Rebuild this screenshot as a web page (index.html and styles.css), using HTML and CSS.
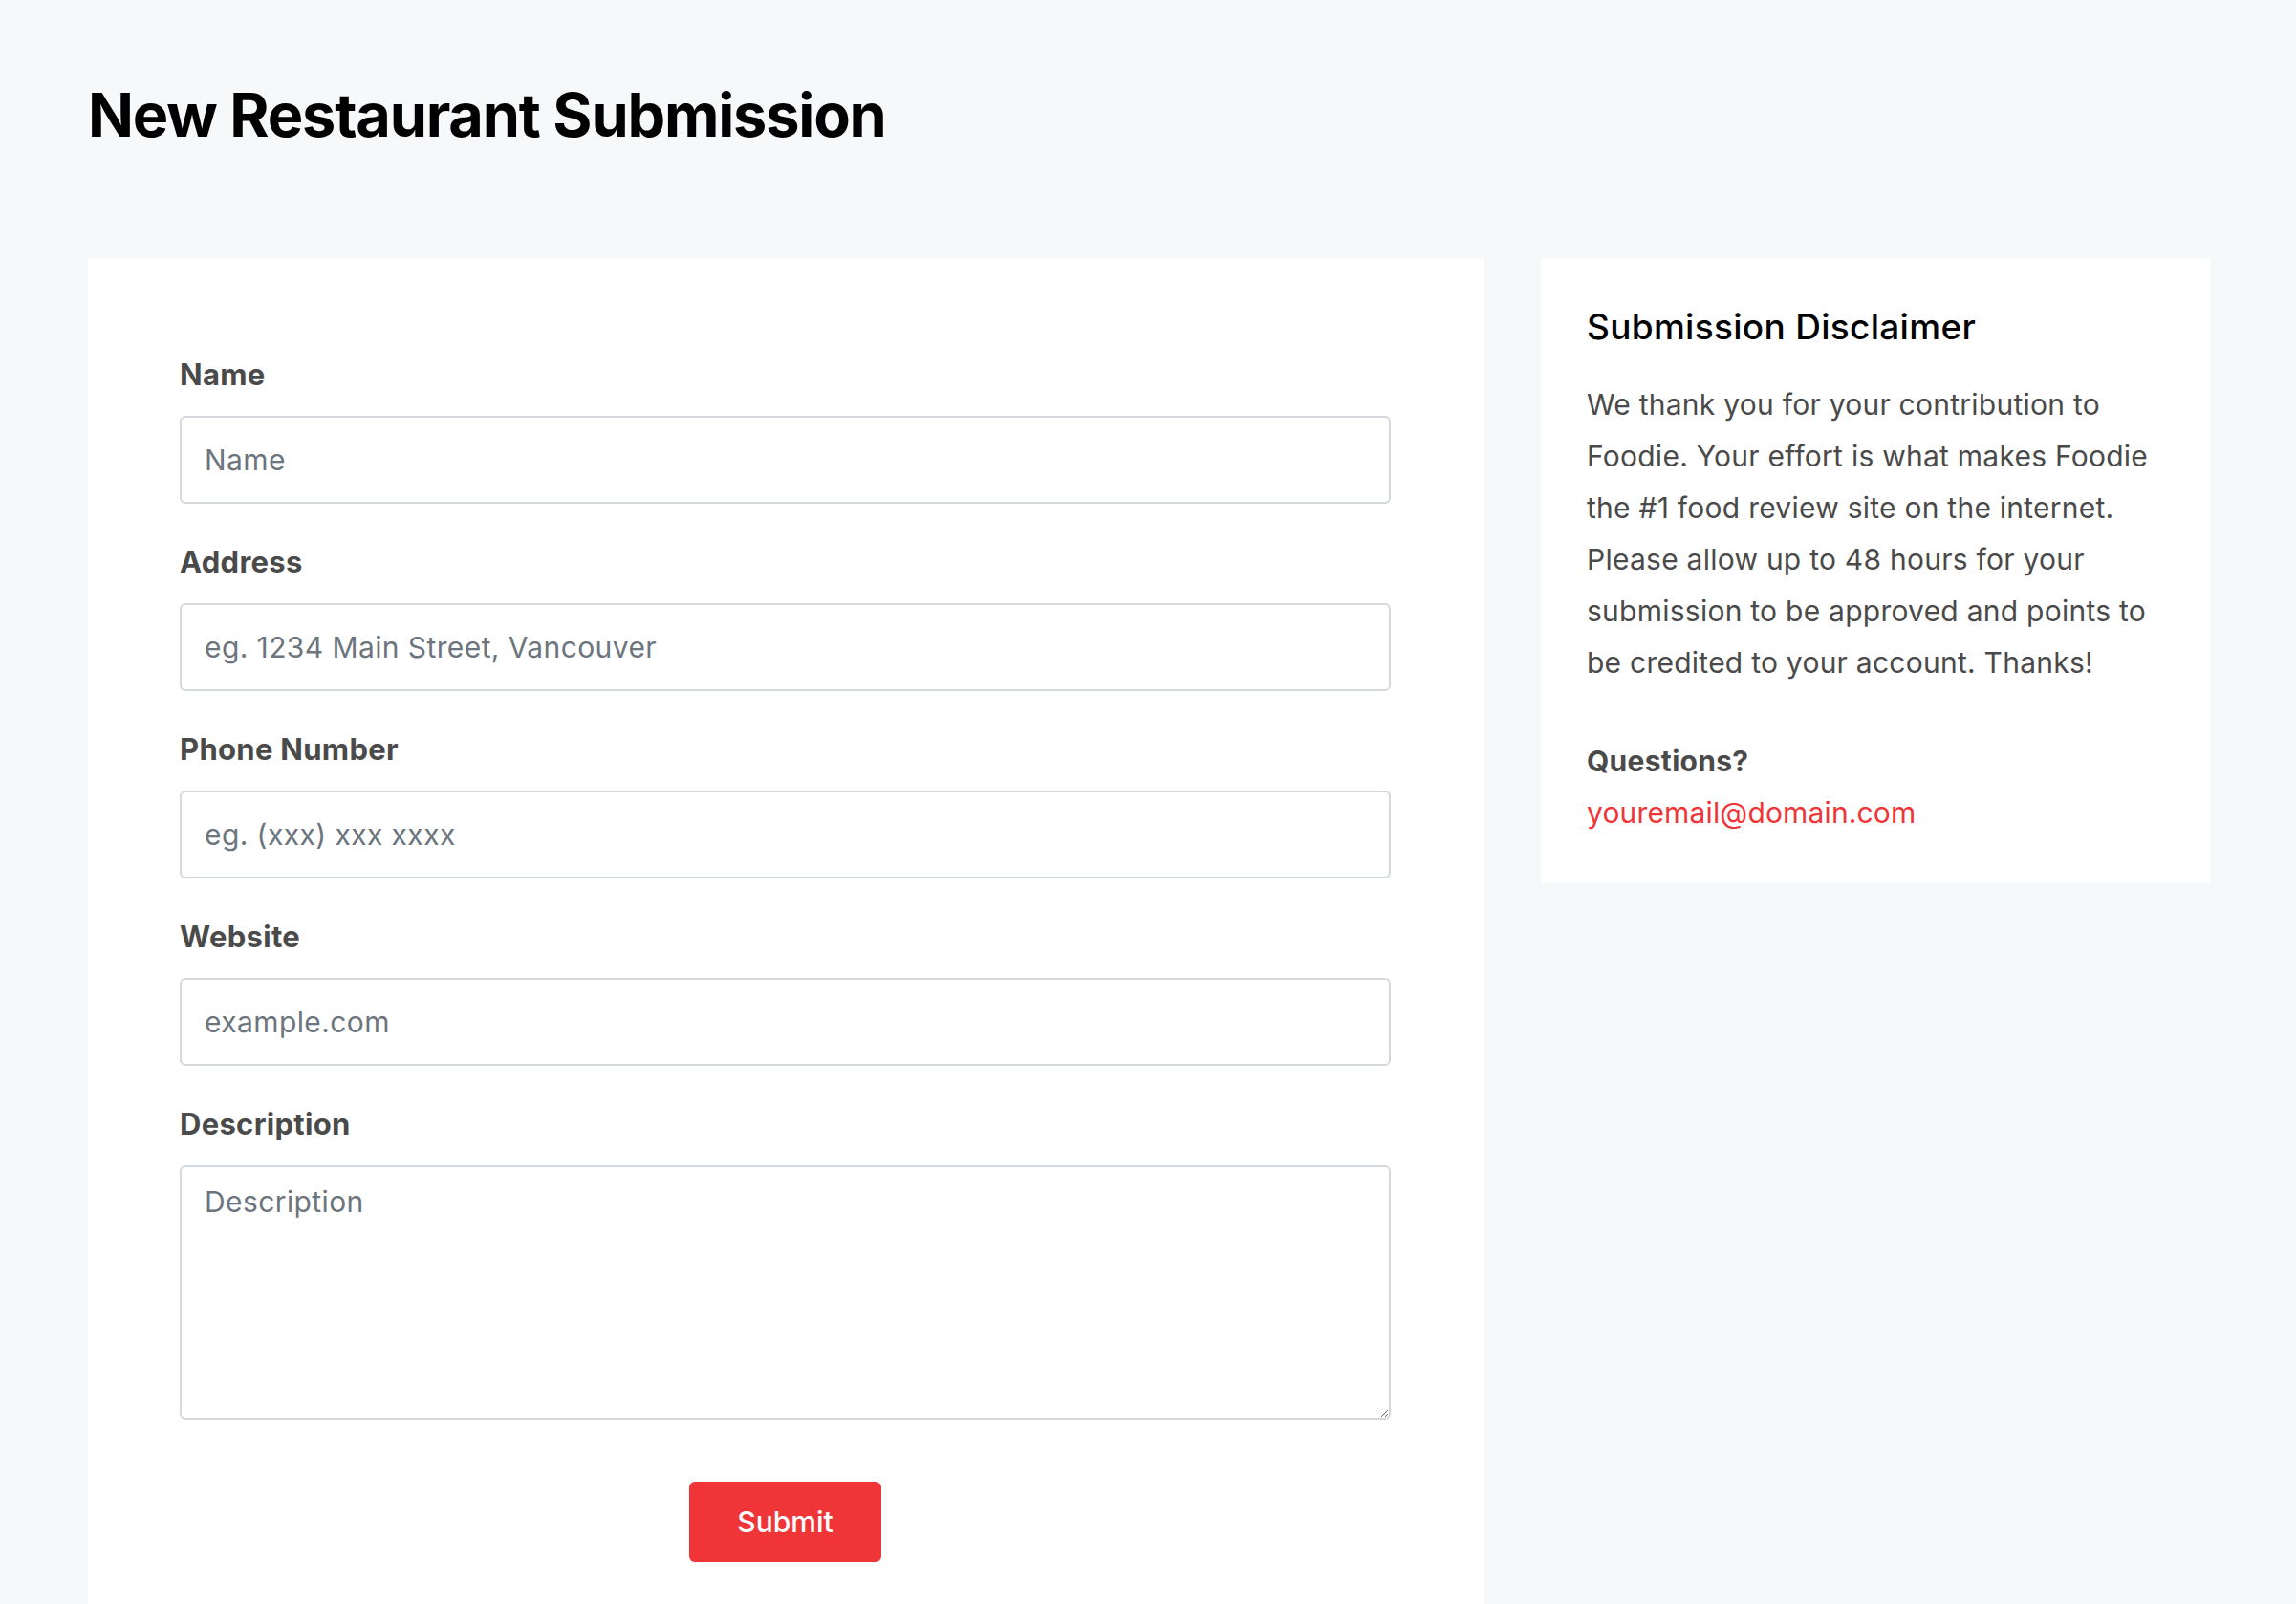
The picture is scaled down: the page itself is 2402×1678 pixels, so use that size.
FILE: index.html
```html
<!DOCTYPE html>
<html lang="en">
<head>
<meta charset="utf-8">
<title>New Restaurant Submission</title>
<link rel="stylesheet" href="styles.css">
</head>
<body>
<main class="page">
  <h1 class="page-title">New Restaurant Submission</h1>
  <div class="layout">
    <section class="form-card">
      <form class="form">
        <div class="field">
          <label class="field-label" for="name">Name</label>
          <input class="field-input" id="name" type="text" placeholder="Name">
        </div>
        <div class="field">
          <label class="field-label" for="address">Address</label>
          <input class="field-input" id="address" type="text" placeholder="eg. 1234 Main Street, Vancouver">
        </div>
        <div class="field">
          <label class="field-label" for="phone">Phone Number</label>
          <input class="field-input" id="phone" type="text" placeholder="eg. (xxx) xxx xxxx">
        </div>
        <div class="field">
          <label class="field-label" for="website">Website</label>
          <input class="field-input" id="website" type="text" placeholder="example.com">
        </div>
        <div class="field">
          <label class="field-label" for="description">Description</label>
          <textarea class="field-input field-textarea" id="description" placeholder="Description"></textarea>
        </div>
        <div class="actions">
          <button class="submit-btn" type="button">Submit</button>
        </div>
      </form>
    </section>
    <aside class="side-card">
      <h2 class="side-title">Submission Disclaimer</h2>
      <p class="side-text">We thank you for your contribution to Foodie. Your effort is what makes Foodie the #1 food review site on the internet. Please allow up to 48 hours for your submission to be approved and points to be credited to your account. Thanks!</p>
      <p class="side-questions">Questions?</p>
      <a class="side-email" href="#">youremail@domain.com</a>
    </aside>
  </div>
</main>
</body>
</html>
```

FILE: styles.css
```css
* {
  box-sizing: border-box;
}

html, body {
  margin: 0;
  padding: 0;
}

body {
  background: #f7f8fa;
  font-family: Inter, "Noto Sans", sans-serif;
  color: #4a4a4a;
}

.page {
  padding: 83px 90px 0 92px;
}

.page-title {
  margin: 0 0 111px 0;
  font-size: 63px;
  line-height: 1.2;
  font-weight: 700;
  color: #000;
  letter-spacing: -1.2px;
}

.layout {
  display: grid;
  grid-template-columns: 1460px 700px;
  column-gap: 60px;
  align-items: start;
}

.form-card {
  background: #fff;
  padding: 99px 97px 120px 96px;
}

.form {
  display: flex;
  flex-direction: column;
}

.field {
  display: flex;
  flex-direction: column;
  margin-bottom: 37px;
}

.field-label {
  font-size: 31px;
  line-height: 45px;
  font-weight: 700;
  color: #4a4a4a;
  letter-spacing: 0.3px;
  margin-bottom: 21px;
}

.field + .field .field-label {
  margin-bottom: 21px;
}

.field + .field {
  margin-top: 1px;
}

.field-input {
  display: block;
  width: 100%;
  height: 92px;
  padding: 0 24px;
  border: 2px solid #d5d9de;
  border-radius: 6px;
  background: #fff;
  font-family: Inter, "Noto Sans", sans-serif;
  font-size: 30px;
  line-height: 45px;
  letter-spacing: 0.4px;
  color: #333;
  outline: none;
}

.field-input::placeholder {
  color: #6c757d;
  opacity: 1;
}

.field-textarea {
  height: 266px;
  padding: 14px 24px 12px;
  resize: vertical;
}

.actions {
  display: flex;
  justify-content: center;
  margin-top: 28px;
}

.submit-btn {
  width: 201px;
  height: 84px;
  border: none;
  border-radius: 6px;
  background: #ef3538;
  color: #fff;
  font-family: Inter, "Noto Sans", sans-serif;
  font-size: 30px;
  font-weight: 500;
  cursor: pointer;
}

.side-card {
  background: #fff;
  padding: 50px 48px 47px 48px;
}

.side-title {
  margin: 0 0 33px 0;
  font-size: 37px;
  line-height: 43px;
  font-weight: 500;
  color: #000;
  letter-spacing: 0.3px;
}

.side-text {
  margin: 0 0 49px 0;
  font-size: 30px;
  line-height: 54px;
  color: #4a4a4a;
  letter-spacing: 0.25px;
}

.side-questions {
  margin: 0;
  font-size: 30px;
  line-height: 54px;
  font-weight: 700;
  color: #4a4a4a;
  letter-spacing: 0.3px;
}

.side-email {
  display: block;
  font-size: 30px;
  line-height: 54px;
  color: #ef3538;
  text-decoration: none;
  letter-spacing: 0.15px;
}
```
